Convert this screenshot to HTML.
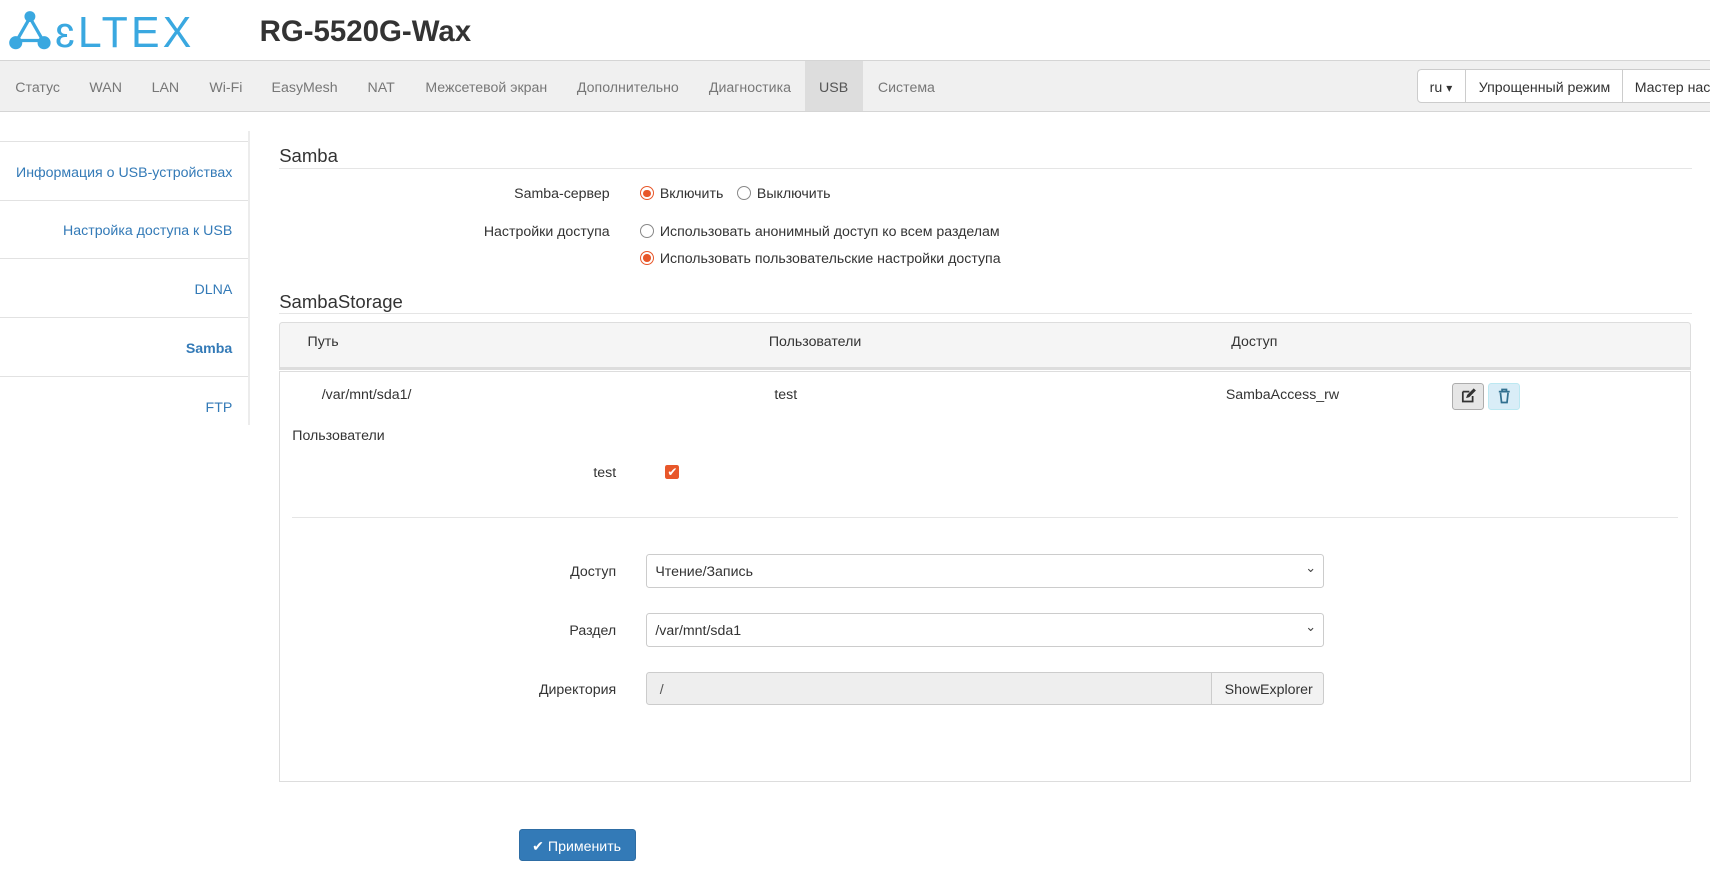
<!DOCTYPE html>
<html><head><meta charset="utf-8"><style>
html{zoom:1.0906}
body{margin:0;width:1568px;height:814px;overflow:hidden;position:relative;font-family:"Liberation Sans",Arial,sans-serif;font-size:13px;color:#333;background:#fff}
.a{position:absolute;white-space:nowrap}
.nav{position:absolute;left:0;top:55px;width:1568px;height:46px;background:#f0f0f0;border-top:1px solid #d5d5d5;border-bottom:1px solid #d5d5d5}
.nav span{position:absolute;top:17px;color:#777;white-space:nowrap}
.grp{position:absolute;left:1299px;top:63px;height:30px;border:1px solid #ccc;border-radius:4px;background:#fff;width:300px}
.grp span{position:absolute;top:9px;color:#333;white-space:nowrap}
.sb{position:absolute;left:0;width:227px;height:53px;border-top:1px solid #e2e2e2}
.sb span{position:absolute;right:14px;top:21px;color:#337ab7;white-space:nowrap}
.lbl{position:absolute;text-align:right;white-space:nowrap}
.radio{position:absolute;width:11px;height:11px;border:1px solid #888;border-radius:50%;background:#fff}
.radio.on{border:1px solid #e8572a;width:11px;height:11px}
.radio.on:after{content:"";position:absolute;left:2px;top:2px;width:7px;height:7px;border-radius:50%;background:#e8572a}
.sel{position:absolute;left:592px;width:620px;height:29px;border:1px solid #ccc;border-radius:3px;background:#fff}
.sel span{position:absolute;left:8px;top:8px}
.sel i{position:absolute;right:6px;top:5px;font-style:normal;font-size:12px;color:#444}
</style></head><body>
<svg class="a" style="left:6px;top:9px" width="175" height="38" viewBox="0 0 175 38">
<g stroke="#3aa8e0" stroke-width="3" fill="none"><line x1="21" y1="7" x2="9" y2="28"/><line x1="21" y1="7" x2="33" y2="28"/><line x1="9" y1="28" x2="33" y2="28"/></g>
<circle cx="21" cy="6" r="5" fill="#3aa8e0"/><circle cx="8" cy="30" r="6" fill="#3aa8e0"/><circle cx="34" cy="30" r="6" fill="#3aa8e0"/>
<text x="44" y="34" font-family="Liberation Sans" font-size="40" fill="#3aa8e0" letter-spacing="3" textLength="128" lengthAdjust="spacingAndGlyphs">ɛLTEX</text>
</svg>
<div class="a" style="left:238px;top:14px;font-size:27px;font-weight:bold;color:#333">RG-5520G-Wax</div>
<div class="nav">
<span style="left:14px">Статус</span><span style="left:82px">WAN</span><span style="left:139px">LAN</span><span style="left:192px">Wi-Fi</span><span style="left:249px">EasyMesh</span><span style="left:337px">NAT</span><span style="left:390px">Межсетевой экран</span><span style="left:529px">Дополнительно</span><span style="left:650px">Диагностика</span>
<div style="position:absolute;left:738px;top:0;width:53px;height:46px;background:#ddd"></div><span style="left:751px;color:#555">USB</span><span style="left:805px">Система</span>
</div>
<div class="grp"><span style="left:11px">ru <small>▾</small></span><div style="position:absolute;left:43px;top:0;height:30px;border-left:1px solid #ccc"></div><span style="left:56px">Упрощенный режим</span><div style="position:absolute;left:187px;top:0;height:30px;border-left:1px solid #ccc"></div><span style="left:199px">Мастер настройки</span></div>

<div class="a" style="left:227px;top:120px;width:2px;height:270px;background:#ececec"></div>
<div class="sb" style="top:129px"><span>Информация о USB-устройствах</span></div>
<div class="sb" style="top:183px"><span>Настройка доступа к USB</span></div>
<div class="sb" style="top:237px"><span>DLNA</span></div>
<div class="sb" style="top:291px"><span style="font-weight:bold">Samba</span></div>
<div class="sb" style="top:345px"><span>FTP</span></div>

<div class="a" style="left:256px;top:133px;font-size:17px">Samba</div>
<div class="a" style="left:256px;top:154px;width:1295px;border-top:1px solid #e5e5e5"></div>
<div class="lbl" style="right:1009px;top:171px">Samba-сервер</div>
<div class="radio on" style="left:587px;top:171px"></div><div class="a" style="left:605px;top:171px">Включить</div>
<div class="radio" style="left:676px;top:171px"></div><div class="a" style="left:694px;top:171px">Выключить</div>
<div class="lbl" style="right:1009px;top:205px">Настройки доступа</div>
<div class="radio" style="left:587px;top:205px"></div><div class="a" style="left:605px;top:205px">Использовать анонимный доступ ко всем разделам</div>
<div class="radio on" style="left:587px;top:230px"></div><div class="a" style="left:605px;top:230px">Использовать пользовательские настройки доступа</div>

<div class="a" style="left:256px;top:267px;font-size:17px">SambaStorage</div>
<div class="a" style="left:256px;top:287px;width:1295px;border-top:1px solid #e5e5e5"></div>
<div class="a" style="left:256px;top:295px;width:1293px;height:41px;background:#f5f5f5;border:1px solid #ddd;border-bottom:3px solid #ddd;border-radius:3px 3px 0 0"></div>
<div class="a" style="left:282px;top:306px">Путь</div><div class="a" style="left:705px;top:306px">Пользователи</div><div class="a" style="left:1129px;top:306px">Доступ</div>
<div class="a" style="left:256px;top:340px;width:1293px;height:375px;border:1px solid #ddd"></div>
<div class="a" style="left:295px;top:355px">/var/mnt/sda1/</div><div class="a" style="left:710px;top:355px">test</div><div class="a" style="left:1124px;top:355px">SambaAccess_rw</div>
<div class="a" style="left:1331px;top:351px;width:28px;height:23px;background:#e6e6e6;border:1px solid #adadad;border-radius:3px">
<svg width="28" height="23" viewBox="0 0 28 23"><path d="M9 7h6M9 7v9h9v-5" stroke="#333" stroke-width="1.6" fill="none"/><path d="M12 13l1-3 6-6 2 2-6 6z" fill="#333"/></svg></div>
<div class="a" style="left:1364px;top:351px;width:28px;height:23px;background:#d9edf7;border:1px solid #bce8f1;border-radius:3px">
<svg width="28" height="23" viewBox="0 0 28 23"><path d="M9 7h10M12 7V5h4v2M10.5 8l1 9h5l1-9" stroke="#31708f" stroke-width="1.6" fill="none"/></svg></div>
<div class="a" style="left:268px;top:392px">Пользователи</div>
<div class="lbl" style="right:1003px;top:426px">test</div>
<div class="a" style="left:610px;top:426px;width:13px;height:13px;background:#e8572a;border-radius:2px;color:#fff;font-size:11px;line-height:13px;text-align:center">✔</div>
<div class="a" style="left:268px;top:474px;width:1271px;border-top:1px solid #e5e5e5"></div>
<div class="lbl" style="right:1003px;top:517px">Доступ</div>
<div class="sel" style="top:508px"><span>Чтение/Запись</span><i>⌄</i></div>
<div class="lbl" style="right:1003px;top:571px">Раздел</div>
<div class="sel" style="top:562px"><span>/var/mnt/sda1</span><i>⌄</i></div>
<div class="lbl" style="right:1003px;top:625px">Директория</div>
<div class="a" style="left:592px;top:616px;width:518px;height:29px;background:#eee;border:1px solid #ccc;border-radius:3px 0 0 3px"><span style="position:absolute;left:12px;top:8px;color:#555">/</span></div>
<div class="a" style="left:1110px;top:616px;width:102px;height:29px;background:#f2f2f2;border:1px solid #ccc;border-radius:0 3px 3px 0"><span style="position:absolute;left:12px;top:8px">ShowExplorer</span></div>
<div class="a" style="left:476px;top:760px;width:105px;height:28px;background:#337ab7;border:1px solid #2e6da4;border-radius:3px;color:#fff"><span style="position:absolute;left:11px;top:8px">✔ Применить</span></div>
</body></html>
